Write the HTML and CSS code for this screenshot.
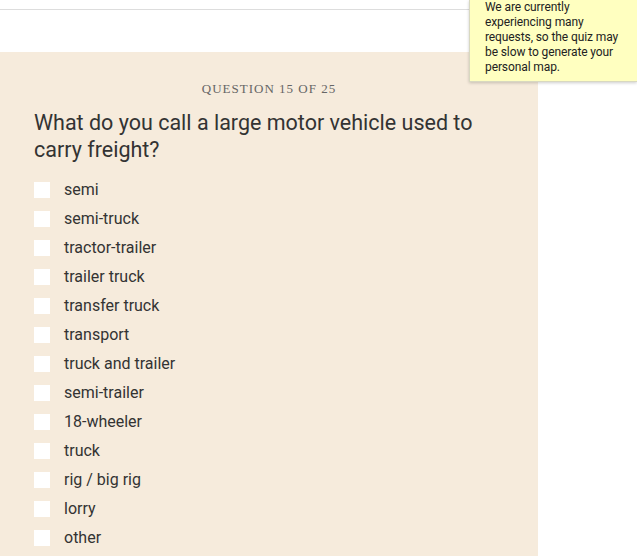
FILE: index.html
```html
<!DOCTYPE html>
<html lang="en">
<head>
    <meta charset="UTF-8">
    <meta name="viewport" content="width=device-width, initial-scale=1.0">
    <title>Dialect Quiz</title>
    <link rel="stylesheet" href="styles.css">
</head>
<body>

<div class="top-bar"></div>

<!-- Notice in the corner -->
<div class="notice">
    We are currently experiencing many requests, so the quiz may be slow to generate your personal map.
</div>

<div class="quiz-panel">
    <div class="question-count">QUESTION 15 OF 25</div>
    <h2 class="question">What do you call a large motor vehicle used to carry freight?</h2>

    <ul class="answers">
        <li><span class="box"></span>semi</li>
        <li><span class="box"></span>semi-truck</li>
        <li><span class="box"></span>tractor-trailer</li>
        <li><span class="box"></span>trailer truck</li>
        <li><span class="box"></span>transfer truck</li>
        <li><span class="box"></span>transport</li>
        <li><span class="box"></span>truck and trailer</li>
        <li><span class="box"></span>semi-trailer</li>
        <li><span class="box"></span>18-wheeler</li>
        <li><span class="box"></span>truck</li>
        <li><span class="box"></span>rig / big rig</li>
        <li><span class="box"></span>lorry</li>
        <li><span class="box"></span>other</li>
    </ul>
</div>

</body>
</html>
```

FILE: styles.css
```css
body {
    margin: 0;
    font-family: Roboto, "Liberation Sans", sans-serif;
    color: #333;
    background: #fff;
}

.top-bar {
    height: 9px;
    border-bottom: 1px solid #ddd;
    margin-bottom: 42px;
}

.notice {
    position: absolute;
    top: 0;
    right: 0;
    width: 168px;
    height: 82px;
    padding: 0 6px 0 15px;
    box-sizing: border-box;
    background-color: #ffffc0;
    border-left: 1px solid #d8d8c0;
    border-bottom: 1px solid #d8d8c0;
    box-shadow: 0 1px 3px rgba(0, 0, 0, 0.2);
    font-size: 12px;
    line-height: 15px;
    letter-spacing: -0.1px;
    color: #222;
}

.quiz-panel {
    width: 538px;
    background-color: #f6ebdc;
    padding: 29px 0 10px 34px;
    box-sizing: border-box;
}

.question-count {
    font-family: "Liberation Serif", serif;
    font-size: 13px;
    line-height: 16px;
    letter-spacing: 1px;
    color: #666;
    text-align: center;
    padding-right: 34px;
}

.question {
    max-width: 450px;
    margin: 12px 0 12px;
    font-size: 21.5px;
    font-weight: normal;
    line-height: 27px;
    color: #333;
}

.answers {
    list-style: none;
    margin: 0;
    padding: 0;
}

.answers li {
    display: flex;
    align-items: center;
    height: 29px;
    font-size: 16px;
    color: #333;
}

.box {
    width: 16px;
    height: 16px;
    background: #fff;
    margin-right: 14px;
}
```
